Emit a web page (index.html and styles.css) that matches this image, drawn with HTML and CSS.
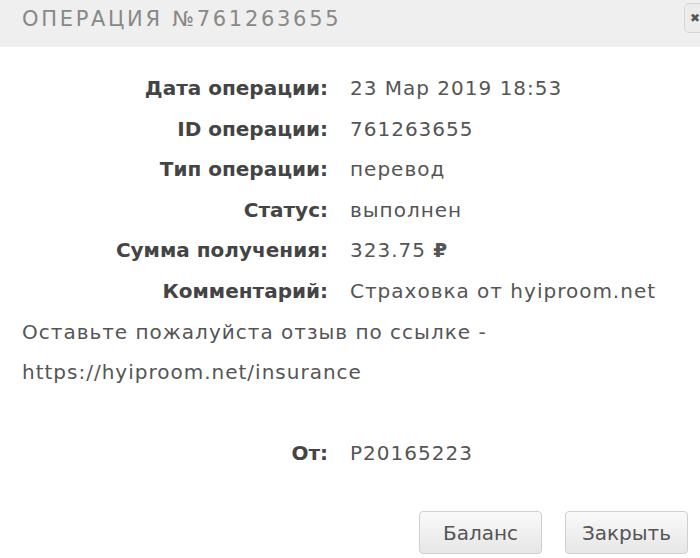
FILE: index.html
```html
<!DOCTYPE html>
<html lang="ru">
<head>
    <meta charset="UTF-8">
    <title>Операция №761263655</title>
    <link rel="stylesheet" href="styles.css">
</head>
<body>
    <div class="dialog">
        <div class="dialog-header">
            <span class="dialog-title">Операция №761263655</span>
            <button class="close-btn">&#10006;</button>
        </div>

        <div class="dialog-body">
            <div class="details">
                <div class="label">Дата операции:</div>
                <div class="value">23 Мар 2019 18:53</div>
                <div class="label">ID операции:</div>
                <div class="value">761263655</div>
                <div class="label">Тип операции:</div>
                <div class="value">перевод</div>
                <div class="label">Статус:</div>
                <div class="value">выполнен</div>
                <div class="label">Сумма получения:</div>
                <div class="value">323.75 <span class="rub">&#8381;</span></div>
                <div class="label">Комментарий:</div>
                <div class="value">Страховка от hyiproom.net</div>
            </div>

            <p class="note">Оставьте пожалуйста отзыв по ссылке -<br>https://hyiproom.net/insurance</p>

            <div class="details from">
                <div class="label">От:</div>
                <div class="value">P20165223</div>
            </div>
        </div>

        <div class="dialog-buttons">
            <button class="btn">Баланс</button>
            <button class="btn">Закрыть</button>
        </div>
    </div>
</body>
</html>
```

FILE: styles.css
```css
* {
    margin: 0;
    padding: 0;
    box-sizing: border-box;
}

body {
    font-family: 'DejaVu Sans', sans-serif;
    background-color: #ffffff;
    color: #555555;
    overflow: hidden;
}

.dialog {
    width: 700px;
    height: 558px;
}

.dialog-header {
    height: 47px;
    background-color: #efefef;
    display: flex;
    align-items: center;
    padding-left: 22px;
    position: relative;
}

.dialog-title {
    font-family: 'DejaVu Sans', sans-serif;
    font-size: 21px;
    letter-spacing: 2.7px;
    text-transform: uppercase;
    color: #888888;
    margin-top: -10px;
}

.close-btn {
    position: absolute;
    top: 3px;
    left: 684px;
    width: 36px;
    height: 30px;
    border: 1px solid #d6d6d6;
    border-radius: 5px;
    background-color: #ececec;
    color: #555555;
    font-size: 12px;
    text-align: left;
    padding-left: 5px;
}

.dialog-body {
    padding: 21px 0 0 22px;
    font-size: 20px;
    letter-spacing: 1px;
    line-height: 40.6px;
}

.details {
    display: grid;
    grid-template-columns: 306px auto;
    column-gap: 22px;
}

.label {
    text-align: right;
    color: #444444;
    font-weight: bold;
    letter-spacing: 0;
}

.value {
    color: #555555;
}

.rub {
    font-weight: bold;
}

.note {
    color: #555555;
    margin-bottom: 40px;
}

.dialog-buttons {
    display: flex;
    gap: 23px;
    padding-left: 419px;
    margin-top: 38px;
}

.btn {
    font-family: 'DejaVu Sans', sans-serif;
    font-size: 20px;
    color: #555555;
    height: 43px;
    width: 123px;
    border: 1px solid #cfcfcf;
    border-radius: 4px;
    background: linear-gradient(#fafafa, #e6e6e6);
    flex-shrink: 0;
}
```
